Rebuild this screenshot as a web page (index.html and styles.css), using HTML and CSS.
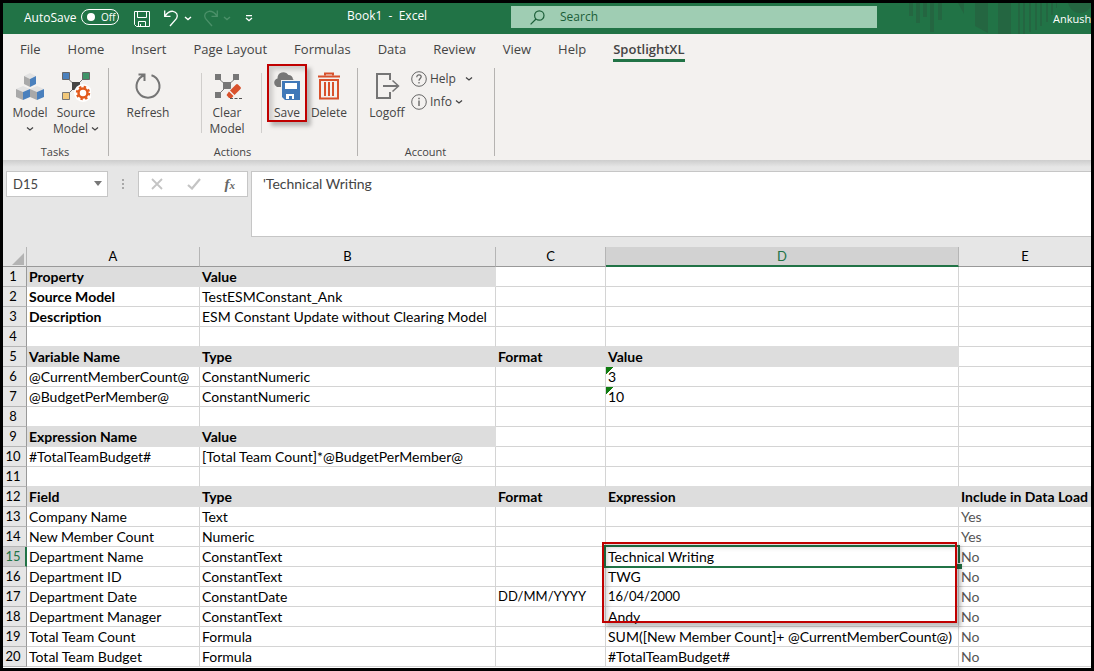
FILE: index.html
```html
<!DOCTYPE html>
<html lang="en">
<head>
<meta charset="utf-8">
<title>Book1 - Excel</title>
<link rel="stylesheet" href="styles.css">
</head>
<body>
<div class="window">
  <header class="titlebar">
    <svg class="pattern" width="184" height="31" viewBox="907 3 184 31" aria-hidden="true">
      <path fill="#246641" d="M909 3h4v13h-4zM916 3h4v20h-4zM923 3h4v14h-4zM930 3h4v29h-4zM938 3h4v17h-4zM958 3h6v11zM975 3h13v30l-13-7zM998 3h13v31h-13zM1018 3h2v31h-2zM1023 3h2v31h-2zM1029 3h2v29h-2zM1035 3h2v27h-2zM1040 3h2v23h-2zM1046 3h2v19h-2zM1051 3h2v12h-2zM1056 3h1v5h-1z"/>
      <circle cx="1080" cy="1" r="12" fill="#246641"/>
    </svg>
    <div class="quick">
      <label class="autosave" for="autosave">AutoSave</label>
      <span class="toggle"><input id="autosave" type="checkbox"><span>Off</span></span>
      <button class="qbtn q-save" aria-label="Save workbook"><svg width="16" height="16" viewBox="0 0 16 16" fill="none" stroke="#fff"><path d="M.5.5h15v15H2.500l-2-2zM3.500.5v6h9v-6M4.500 15.500v-5h7v5M6.500 13v2.500"/></svg></button>
      <button class="qbtn q-undo" aria-label="Undo"><svg width="15" height="17" viewBox="0 0 15 17" fill="none" stroke="#fff" stroke-width="1.300"><path d="M.7.5v5.800h5.800M1 6C3.500 2.500 6 1 9 1.300c3.500.4 5.400 3.900 3.600 7L6 16"/></svg></button>
      <button class="qbtn q-arrow" aria-label="Undo history"><svg width="8" height="5" viewBox="0 0 8 5" fill="none" stroke="#fff" stroke-width="1.400"><path d="M1 1l3 2.500L7 1"/></svg></button>
      <button class="qbtn q-redo" aria-label="Redo"><svg width="15" height="17" viewBox="0 0 15 17" fill="none" stroke="#4b9069" stroke-width="1.300"><path d="M14.300.5v5.800H8.500M14 6C11.500 2.500 9 1 6 1.300c-3.500.4-5.400 3.900-3.600 7L9 16"/></svg></button>
      <button class="qbtn q-arrow" aria-label="Redo history"><svg width="8" height="5" viewBox="0 0 8 5" fill="none" stroke="#4b9069" stroke-width="1.400"><path d="M1 1l3 2.500L7 1"/></svg></button>
      <button class="qbtn q-more" aria-label="Customize toolbar"><svg width="8" height="7" viewBox="0 0 8 7" fill="none" stroke="#fff" stroke-width="1.300"><path d="M1 .7h6M1 3l3 2.700L7 3"/></svg></button>
    </div>
    <div class="doc-title">Book1&nbsp; -&nbsp; Excel</div>
    <div class="search">
      <svg width="15" height="15" viewBox="0 0 15 15" fill="none" stroke="#1b5e38" stroke-width="1.200"><circle cx="9.300" cy="5.500" r="4.700"/><path d="M6 9L.6 14.400"/></svg>
      <input type="text" placeholder="Search" aria-label="Search">
    </div>
    <div class="user">Ankush</div>
  </header>

  <nav class="tabs">
    <button>File</button><button>Home</button><button>Insert</button><button>Page Layout</button><button>Formulas</button><button>Data</button><button>Review</button><button>View</button><button>Help</button><button class="active">SpotlightXL</button>
  </nav>

  <section class="ribbon">
    <div class="group tasks">
      <div class="tools">
        <button class="tool">
          <svg width="30" height="30" viewBox="0 0 30 30"><path fill="#e2e2e2" d="M15 1l6 3-6 3-6-3zM8 14l7 3-7 3-7-3zM22 14l7 3-7 3-7-3z"/><path fill="#a9a9a9" d="M9 4l6 3v8l-6-3zM1 17l7 3v8l-7-3zM15 17l7 3v8l-7-3z"/><path fill="#4a80bd" d="M21 4l-6 3v8l6-3zM15 17l-7 3v8l7-3zM29 17l-7 3v8l7-3z"/></svg>
          <span>Model</span><svg class="chev" width="8" height="16" viewBox="0 0 8 16"><path d="M1 6.500L4 9l3-2.500"/></svg>
        </button>
        <button class="tool">
          <svg width="30" height="30" viewBox="0 0 30 30"><path d="M4 4l11 10L25 4M15 14L4 25" fill="none" stroke="#777"/><path fill="#444" d="M11 10h8v8h-8z"/><path fill="#4a80bd" stroke="#666" d="M1.500.5h7v7h-7z"/><path fill="#3f9468" stroke="#666" d="M21.500.5h7v7h-7z"/><path fill="#f2c879" stroke="#777" d="M1.500 20.500h7v7h-7z"/><circle cx="22" cy="21" r="9" fill="#fff"/><circle cx="22" cy="21" r="4.500" fill="none" stroke="#e25a1c" stroke-width="2.500"/><circle cx="22" cy="21" r="6.200" fill="none" stroke="#e25a1c" stroke-width="2" stroke-dasharray="2.400 2.470"/></svg>
          <span>Source</span><span class="line">Model<svg class="chev" width="8" height="16" viewBox="0 0 8 16"><path d="M1 6.500L4 9l3-2.500"/></svg></span>
        </button>
      </div>
      <div class="caption">Tasks</div>
    </div>
    <div class="group actions">
      <div class="tools">
        <button class="tool">
          <svg width="30" height="30" viewBox="0 0 30 30" fill="none" stroke="#757575" stroke-width="2"><path d="M11.500 3.200A11.500 11.500 0 1 0 18.500 3.200M5.500 2.500h6v6.500"/></svg>
          <span>Refresh</span>
        </button>
        <i class="rule first"></i>
        <button class="tool clear">
          <svg width="30" height="30" viewBox="0 0 30 30"><path d="M5 5l10 9L25 5M15 14L5 24" fill="none" stroke="#777"/><path fill="#777" d="M3 2h6v6H3zM21 2h6v6h-6zM3 20h6v6H3zM11 10h8v7h-8z"/><path fill="#f3f1ef" d="M14 21l11-10 5 4-10 13h-4l-3-3z"/><path fill="#d8512c" d="M24 12.500q1-1 2 0l2.500 2.500q1 1 0 2L22.500 23 18 18.500zM17 19.500l4.500 4.500-1.800 2H17l-2.500-3z"/><path d="M18 26.500h12" stroke="#555" stroke-dasharray="3 1.500"/></svg>
          <span>Clear</span><span>Model</span>
        </button>
        <i class="rule"></i>
        <button class="tool save">
          <svg width="30" height="30" viewBox="0 0 30 30"><path fill="#777" d="M5 15a4.500 4.500 0 0 1 .5-8.500A6 6 0 0 1 16.500 3 4.500 4.500 0 0 1 21 7.500a4 4 0 0 1 3 4L21 15z"/><path fill="#f3f1ef" d="M9 8h20v20H9z"/><path fill="#4078b8" d="M10 9h18v19H13l-3-3z"/><path fill="#fff" d="M13 11h12v6H13zM14 22h8v5h-8z"/><path fill="#4078b8" d="M17 24h3v4h-3z"/></svg>
          <span>Save</span>
        </button>
        <button class="tool delete">
          <svg width="30" height="30" viewBox="0 0 30 30" fill="none" stroke="#d8512c"><path stroke-width="2" d="M4 4.500h22M6 8h18v18.500H6z"/><path d="M11 3.500v-2h8v2" stroke-width="2"/><path stroke-width="2" d="M11 10v14M15 10v14M19 10v14"/></svg>
          <span>Delete</span>
        </button>
      </div>
      <div class="caption">Actions</div>
    </div>
    <div class="group account">
      <div class="tools">
        <button class="tool logoff">
          <svg width="30" height="30" viewBox="0 0 30 30" fill="none" stroke="#757575" stroke-width="2"><path d="M18 8V2H5v24h13v-6M11 14h15"/><path stroke-width="1.500" d="M20.500 8.500L26.500 14l-6 5.500"/></svg>
          <span>Logoff</span>
        </button>
        <div class="stack">
          <button class="small help"><svg width="16" height="16" viewBox="0 0 16 16" fill="none" stroke="#666"><circle cx="8" cy="8" r="7.300"/><path stroke-width="1.200" d="M5.800 6.200C5.800 4.500 6.800 3.800 8 3.800s2.200.8 2.200 2C10.200 7.500 8 7.600 8 9.700M8 11v1.500"/></svg><span>Help</span><svg class="chev" width="8" height="16" viewBox="0 0 8 16"><path d="M1 6.500L4 9l3-2.500"/></svg></button>
          <button class="small"><svg width="16" height="16" viewBox="0 0 16 16" fill="none" stroke="#666"><circle cx="8" cy="8" r="7.300"/><path stroke-width="1.400" d="M8 6.500v5.500M8 3.800v1.500"/></svg><span>Info</span><svg class="chev" width="8" height="16" viewBox="0 0 8 16"><path d="M1 6.500L4 9l3-2.500"/></svg></button>
        </div>
      </div>
      <div class="caption">Account</div>
    </div>
  </section>

  <section class="formula">
    <div class="namebox"><input type="text" value="D15" aria-label="Name box"><button aria-label="Open name list"><svg width="10" height="6" viewBox="0 0 10 6"><path fill="#777" d="M1 0h8L5 5z"/></svg></button></div>
    <svg class="grip" width="4" height="12" viewBox="0 0 4 12"><path fill="#a8a8a8" d="M1 1h2v2H1zM1 5h2v2H1zM1 9h2v2H1z"/></svg>
    <div class="fxbox">
      <button aria-label="Cancel"><svg width="12" height="12" viewBox="0 0 12 12" fill="none" stroke="#c4c4c4" stroke-width="1.800"><path d="M1 1l10 10M11 1L1 11"/></svg></button>
      <button aria-label="Enter"><svg width="14" height="12" viewBox="0 0 14 12" fill="none" stroke="#c4c4c4" stroke-width="2.200"><path d="M1 7l4 3.500L13 1"/></svg></button>
      <button class="fx" aria-label="Insert function">f<small>x</small></button>
    </div>
    <textarea class="content" aria-label="Formula bar">'Technical Writing</textarea>
  </section>

  <main class="sheet">
    <table>
      <colgroup><col class="cn"><col class="ca"><col class="cb"><col class="cc"><col class="cd"><col></colgroup>
      <thead>
        <tr><th class="corner"><svg width="12" height="12" viewBox="0 0 12 12"><path fill="#b3b3b3" d="M12 0v12H0z"/></svg></th><th>A</th><th>B</th><th>C</th><th class="sel">D</th><th>E</th></tr>
      </thead>
      <tbody>
        <tr><th>1</th><td class="h">Property</td><td class="h">Value</td><td></td><td></td><td></td></tr>
        <tr><th>2</th><td class="b">Source Model</td><td>TestESMConstant_Ank</td><td></td><td></td><td></td></tr>
        <tr><th>3</th><td class="b">Description</td><td>ESM Constant Update without Clearing Model</td><td></td><td></td><td></td></tr>
        <tr><th>4</th><td class="u"></td><td class="u"></td><td class="u"></td><td class="u"></td><td></td></tr>
        <tr><th>5</th><td class="h">Variable Name</td><td class="h">Type</td><td class="h">Format</td><td class="h">Value</td><td></td></tr>
        <tr><th>6</th><td>@CurrentMemberCount@</td><td>ConstantNumeric</td><td></td><td class="flag">3</td><td></td></tr>
        <tr><th>7</th><td>@BudgetPerMember@</td><td>ConstantNumeric</td><td></td><td class="flag">10</td><td></td></tr>
        <tr><th>8</th><td class="u"></td><td class="u"></td><td></td><td></td><td></td></tr>
        <tr><th>9</th><td class="h">Expression Name</td><td class="h">Value</td><td></td><td></td><td></td></tr>
        <tr><th>10</th><td>#TotalTeamBudget#</td><td>[Total Team Count]*@BudgetPerMember@</td><td></td><td></td><td></td></tr>
        <tr><th>11</th><td class="u"></td><td class="u"></td><td class="u"></td><td class="u"></td><td class="u"></td></tr>
        <tr><th>12</th><td class="h">Field</td><td class="h">Type</td><td class="h">Format</td><td class="h">Expression</td><td class="h">Include in Data Load</td></tr>
        <tr><th>13</th><td>Company Name</td><td>Text</td><td></td><td></td><td class="g">Yes</td></tr>
        <tr><th>14</th><td>New Member Count</td><td>Numeric</td><td></td><td></td><td class="g">Yes</td></tr>
        <tr><th class="sel">15</th><td>Department Name</td><td>ConstantText</td><td></td><td class="current">Technical Writing<i class="cursor"></i><i class="callout"></i></td><td class="g">No</td></tr>
        <tr><th>16</th><td>Department ID</td><td>ConstantText</td><td></td><td>TWG</td><td class="g">No</td></tr>
        <tr><th>17</th><td>Department Date</td><td>ConstantDate</td><td class="date">DD/MM/YYYY</td><td class="date">16/04/2000</td><td class="g">No</td></tr>
        <tr><th>18</th><td>Department Manager</td><td>ConstantText</td><td></td><td>Andy</td><td class="g">No</td></tr>
        <tr><th>19</th><td>Total Team Count</td><td>Formula</td><td></td><td>SUM([New Member Count]+ @CurrentMemberCount@)</td><td class="g">No</td></tr>
        <tr><th>20</th><td>Total Team Budget</td><td>Formula</td><td></td><td>#TotalTeamBudget#</td><td class="g">No</td></tr>
      </tbody>
    </table>
  </main>
</div>
</body>
</html>
```
FILE: styles.css
```css
* { box-sizing: border-box; }
body {
  margin: 0;
  background: #000;
  font-family: "Open Sans", "Noto Sans", sans-serif;
  font-size: 12px;
  line-height: 16px;
  color: #444;
}
button, input, textarea { font: inherit; color: inherit; border: 0; background: none; padding: 0; margin: 0; outline: 0; }
svg { display: block; flex: none; }
.window {
  display: flex;
  flex-direction: column;
  height: 100vh;
  border: 3px solid #000;
  background: #fff;
  overflow: hidden;
}

/* Title bar */
.titlebar {
  position: relative;
  display: flex;
  align-items: center;
  flex: none;
  height: 31px;
  padding-left: 21px;
  background: #217346;
  color: #fff;
  overflow: hidden;
}
.pattern { position: absolute; right: 0; top: 0; }
.quick { display: flex; align-items: center; width: 323px; flex: none; font-size: 11px; }
.autosave { width: 57px; font-size: 12px; padding-bottom: 2px; }
.toggle {
  display: flex;
  align-items: center;
  gap: 6px;
  width: 38px;
  height: 16px;
  padding-left: 5px;
  margin-right: 15px;
  border: 1px solid #fff;
  border-radius: 8px;
  font-size: 10px;
}
.quick .toggle { margin-bottom: 4px; }
.toggle input { appearance: none; width: 8px; height: 8px; border-radius: 50%; background: #fff; flex: none; }
.q-undo { margin-left: 14px; }
.q-arrow { margin-left: 5px; }
.q-redo { margin-left: 11px; }
.q-more { margin-left: 14px; }
.doc-title { width: 164px; flex: none; font-size: 12px; padding-bottom: 5px; }
.search {
  display: flex;
  align-items: center;
  gap: 15px;
  flex: 1;
  height: 22px;
  margin-bottom: 3px;
  padding-left: 19px;
  background: #9fcdb3;
}
.search input { flex: 1; min-width: 0; }
.search input::placeholder { color: #1b5e38; opacity: 1; }
.user { position: relative; width: 38px; margin-left: 176px; flex: none; white-space: nowrap; font-size: 11px; }

/* Ribbon */
.tabs { display: flex; flex: none; gap: 27px; height: 30px; padding: 5px 0 2px 17px; background: #f3f1ef; font-size: 13px; }
.tabs button { height: 23px; border-bottom: 3px solid transparent; white-space: nowrap; }
.tabs .active { border-color: #217346; font-weight: 600; }
.ribbon { display: flex; flex: none; height: 96px; background: #f3f1ef; }
.group { position: relative; display: flex; flex-direction: column; justify-content: space-between; }
.group::after { content: ""; position: absolute; right: 0; top: 4px; bottom: 4px; width: 1px; background: #b5b3b1; }
.tools { display: flex; align-items: flex-start; }
.tasks { width: 106px; }
.tasks .tools { padding-left: 4px; }
.actions { width: 249px; }
.actions .tools { padding-left: 16px; }
.account { width: 137px; }
.account .tools { padding-left: 6px; }
.caption { text-align: center; height: 16px; font-size: 11px; padding-right: 2px; }
.tool { display: flex; flex-direction: column; align-items: center; width: 46px; padding-top: 8px; font-size: 12px; white-space: nowrap; }
.tool > svg:first-child { margin-bottom: 3px; }
.tool .line { display: flex; gap: 3px; }
.chev { fill: none; stroke: #444; stroke-width: 1.3; }
.rule { width: 1px; height: 60px; margin: 9px 2px 0 11px; background: #d0cecc; }
.rule.first { margin-left: 30px; }
.tool.save {
  width: 40px;
  height: 58px;
  margin-left: 3px;
  padding-top: 6px;
  border: 2px solid #c00000;
  box-shadow: 4px 4px 4px rgba(0, 0, 0, .25), inset 4px 4px 4px rgba(0, 0, 0, .15);
}
.tool.delete { width: 44px; }
.stack { display: flex; flex-direction: column; padding-top: 3px; margin-left: 1px; }
.small { display: flex; align-items: center; gap: 3px; height: 23px; }
.help .chev { margin-left: 6px; }

/* Formula bar */
.formula {
  display: flex;
  align-items: flex-start;
  flex: none;
  height: 87px;
  padding: 11px 0 10px 3px;
  background: linear-gradient(#cdcdcd, #e6e6e6 7px);
  font-family: Lato, "Open Sans", sans-serif;
  font-size: 14px;
}
.namebox, .fxbox { display: flex; align-items: center; height: 26px; border: 1px solid #c6c6c6; background: #fff; }
.namebox { width: 102px; padding: 0 4px 0 6px; font-size: 13px; }
.namebox input { flex: 1; min-width: 0; }
.grip { margin: 7px 13px 0; }
.fxbox { width: 110px; justify-content: space-between; padding: 0 12px; margin-right: 3px; }
.fx { font-family: "Liberation Serif", serif; font-style: italic; font-weight: bold; font-size: 15px; color: #666; }
.fx small { font-size: 11px; }
.content { flex: 1; height: 66px; padding: 4px 11px; border: 1px solid #c6c6c6; border-right: 0; background: #fff; resize: none; }

/* Worksheet */
.sheet { flex: 1; min-height: 0; }
table { width: 100%; border-collapse: separate; border-spacing: 0; table-layout: fixed; font-family: Lato, "Open Sans", sans-serif; font-size: 14px; line-height: 19px; color: #000; }
.cn { width: 24px; }
.ca { width: 173px; }
.cb { width: 296px; }
.cc { width: 110px; }
.cd { width: 353px; }
th, td { height: 20px; padding: 0 2px; border: solid #d4d4d4; border-width: 0 1px 1px 0; white-space: nowrap; }
td { text-align: left; }
th { padding: 0 3px 0 0; background: #e6e6e6; font-size: 13px; font-weight: 400; border-color: #b5b5b5 #999 #b5b5b5 #999; }
thead th { padding: 0; border-color: #999 #b5b5b5; }
thead .sel { background: #d2d2d2; color: #217346; border-bottom: 2px solid #217346; line-height: 18px; }
tbody .sel { padding-right: 2px; background: #d2d2d2; color: #217346; border-right: 2px solid #217346; }
tr > :last-child { border-right: 0; }
.corner svg { margin: 4px 0 0 9px; }
.h { background: #ddd; border-color: #ddd; font-weight: 700; }
.u { border-bottom-color: #ddd; }
.b { font-weight: 700; }
.g { color: #555; }
.date { font-size: 13px; }
.flag { background: linear-gradient(135deg, #107c10 5px, transparent 5px); }
.current { position: relative; }
.cursor { position: absolute; left: -2px; right: -2px; top: -2px; bottom: -2px; border: 2px solid #217346; }
.cursor::after { content: ""; position: absolute; right: -4px; bottom: -3px; width: 5px; height: 5px; background: #217346; border: solid #fff; border-width: 1px 0 0 1px; }
.callout {
  position: absolute;
  z-index: 1;
  left: -4px;
  top: -5px;
  width: calc(100% + 3px);
  height: 81px;
  border: 2px solid #c00000;
  box-shadow: 4px 4px 4px rgba(0, 0, 0, .25), inset 4px 4px 4px rgba(0, 0, 0, .15);
}
```
